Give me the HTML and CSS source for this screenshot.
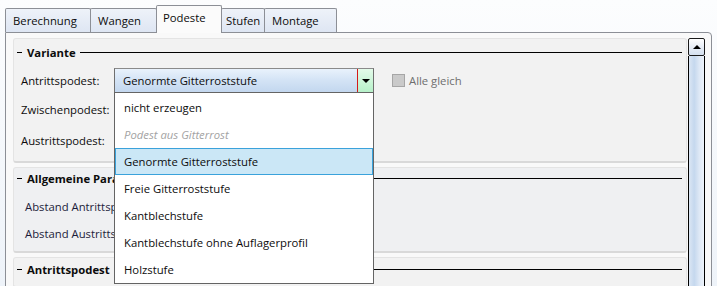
FILE: index.html
```html
<!DOCTYPE html>
<html lang="de">
<head>
    <meta charset="UTF-8">
    <title>Podeste</title>
    <link rel="stylesheet" href="styles.css">
</head>
<body>
    <div class="window">
        <div class="tabs">
            <div class="tab">Berechnung</div>
            <div class="tab">Wangen</div>
            <div class="tab active">Podeste</div>
            <div class="tab">Stufen</div>
            <div class="tab">Montage</div>
        </div>

        <div class="panel">
            <div class="content">
                <div class="group">
                    <div class="group-head"><span class="dash"></span><b>Variante</b><span class="rule"></span></div>
                    <div class="field first">
                        <label>Antrittspodest:</label>
                        <div class="combo">
                            <span class="combo-text">Genormte Gitterroststufe</span>
                            <span class="combo-btn"><span class="arrow"></span></span>
                            <!-- aufgeklappte Liste liegt über den Gruppen darunter -->
                            <ul class="dropdown">
                                <li>nicht erzeugen</li>
                                <li class="disabled">Podest aus Gitterrost</li>
                                <li class="selected">Genormte Gitterroststufe</li>
                                <li>Freie Gitterroststufe</li>
                                <li>Kantblechstufe</li>
                                <li>Kantblechstufe ohne Auflagerprofil</li>
                                <li>Holzstufe</li>
                            </ul>
                        </div>
                        <span class="check"></span>
                        <span class="check-label">Alle gleich</span>
                    </div>
                    <div class="field second">
                        <label>Zwischenpodest:</label>
                    </div>
                    <div class="field third">
                        <label>Austrittspodest:</label>
                    </div>
                </div>

                <div class="group params">
                    <div class="group-head"><span class="dash"></span><b>Allgemeine Parameter</b><span class="rule"></span></div>
                    <div class="field first">
                        <label>Abstand Antrittspodest</label>
                    </div>
                    <div class="field tight">
                        <label>Abstand Austrittspodest</label>
                    </div>
                </div>

                <div class="group last">
                    <div class="group-head"><span class="dash"></span><b>Antrittspodest</b><span class="rule"></span></div>
                </div>
            </div>

            <div class="scrollbar">
                <div class="sb-up"><span></span></div>
                <div class="sb-thumb"></div>
            </div>
        </div>
    </div>
</body>
</html>
```

FILE: styles.css
```css
html, body {
    margin: 0;
    height: 100%;
}
body {
    font-family: "Segoe UI", "Open Sans", sans-serif;
    font-size: 11.3px;
    color: #0c0c0c;
    background: linear-gradient(#fcfdfe, #eef3f9);
    overflow: hidden;
}
.window {
    padding: 0 5px 0 5px;
}
.tabs {
    display: flex;
    align-items: flex-end;
    height: 32px;
}
.tab {
    box-sizing: border-box;
    height: 24px;
    margin-right: -1px;
    padding: 2px 0 0 7px;
    line-height: 19px;
    border: 1px solid #8c8f96;
    border-bottom: none;
    border-radius: 2px 2px 0 0;
    background: linear-gradient(#eef2f9, #dee6f3);
    white-space: nowrap;
}
.tab:nth-child(1) { width: 86px; }
.tab:nth-child(2) { width: 67px; }
.tab:nth-child(3) { width: 66px; padding-left: 6px; }
.tab:nth-child(4) { width: 44px; padding-left: 4px; }
.tab:nth-child(5) { width: 73px; }
.tab.active {
    position: relative;
    z-index: 2;
    height: 28px;
    margin-bottom: -1px;
    padding-top: 2px;
    background: #fbfbfb;
}
.panel {
    display: flex;
    height: 300px;
    padding: 5px 6px 0 7px;
    border: 1px solid #8c8f96;
    border-radius: 0 4px 0 0;
    background: #f9f9f9;
}
.content {
    width: 676px;
    display: flex;
    flex-direction: column;
    gap: 4px;
}
.group {
    padding: 4px 0 8px 0;
    border: 1px solid #e4e4e4;
    border-bottom: 2px solid #d9d9d9;
    border-radius: 3px;
    background: #f2f2f2;
}
.group.params {
    padding: 1px 0 5px 0;
    background: #eff0f2;
}
.group.last {
    padding-top: 2px;
}
.group-head {
    display: flex;
    align-items: center;
    height: 18px;
    padding: 0 4px 0 3px;
}
.group-head b {
    font-weight: 700;
    margin-left: 5px;
    white-space: nowrap;
}
.dash {
    width: 5px;
    height: 1px;
    background: #000;
}
.rule {
    flex: 1;
    height: 1px;
    margin-left: 4px;
    background: #000;
}
.field {
    display: flex;
    align-items: center;
    height: 25px;
    padding-left: 7px;
}
.field label {
    width: 93px;
    white-space: nowrap;
}
.field.first { margin-top: 7px; }
.field.second { margin-top: 4px; }
.field.third { margin-top: 6px; }
.field.tight { margin-top: 2px; }
.params .field {
    padding-left: 11px;
    color: #1c1c3a;
}
.params .field label {
    width: auto;
}
.combo {
    position: relative;
    z-index: 3;
    box-sizing: border-box;
    display: flex;
    width: 260px;
    height: 25px;
    border: 1px solid #6f6f6f;
    border-top-color: #8a8a8a;
    background: linear-gradient(#e9f2fc, #d3e3f5 50%, #c3d7ef);
}
.combo-text {
    flex: 1;
    padding-left: 8px;
    line-height: 23px;
}
.combo-btn {
    display: flex;
    align-items: center;
    justify-content: center;
    width: 15px;
    border-left: 1px solid #d41a1a;
    background: linear-gradient(#e4fbea, #b7f1c9);
}
.arrow {
    width: 0;
    height: 0;
    border-left: 4px solid transparent;
    border-right: 4px solid transparent;
    border-top: 4px solid #000;
}
.dropdown {
    position: absolute;
    top: 100%;
    left: -1px;
    right: -1px;
    margin: 0;
    padding: 1px 0 0 0;
    list-style: none;
    border: 1px solid #646464;
    background: #fff;
}
.dropdown li {
    box-sizing: border-box;
    height: 27px;
    padding-left: 9px;
    line-height: 27px;
    white-space: nowrap;
}
.dropdown li.disabled {
    font-style: italic;
    color: #a3a3a3;
}
.dropdown li.selected {
    padding-left: 8px;
    line-height: 25px;
    border: 1px solid #3aa2db;
    background: #cbe7f6;
}
.check {
    box-sizing: border-box;
    width: 13px;
    height: 13px;
    margin-left: 18px;
    border: 1px solid #a6a6a6;
    background: #cacaca;
}
.check-label {
    margin-left: 4px;
    color: #6e6e6e;
}
.scrollbar {
    display: flex;
    flex-direction: column;
    width: 17px;
    margin-left: 1px;
}
.sb-up {
    box-sizing: border-box;
    display: flex;
    align-items: center;
    justify-content: center;
    height: 18px;
    border: 1px solid #1a1a1a;
    border-radius: 2px;
    background: linear-gradient(#ffffff, #e8eef7 50%, #d4e0ef);
}
.sb-up span {
    width: 0;
    height: 0;
    border-left: 4px solid transparent;
    border-right: 4px solid transparent;
    border-bottom: 4px solid #000;
}
.sb-thumb {
    flex: 1;
    border-left: 1px solid #000;
    border-right: 1px solid #000;
    background: linear-gradient(to right, #dbe6f4, #c5d8ee 35%, #dfe9f6 70%, #edf3fa);
}
```
